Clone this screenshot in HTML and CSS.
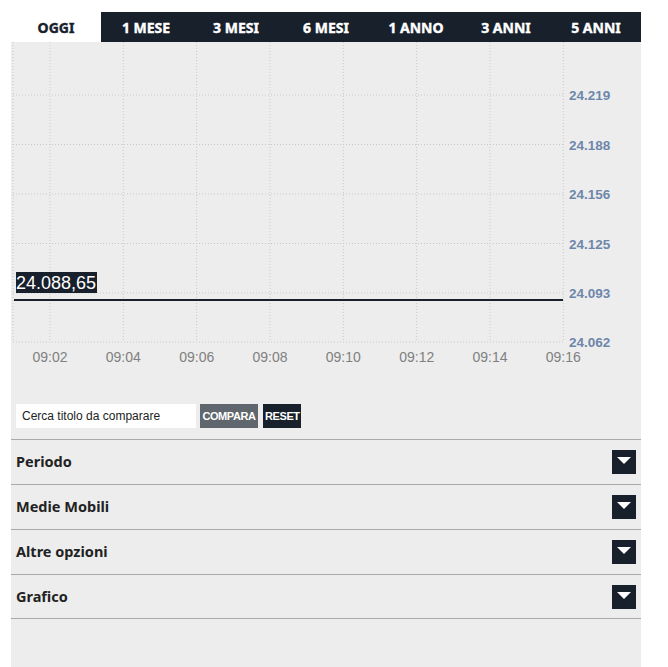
FILE: index.html
```html
<!DOCTYPE html>
<html lang="it">
<head>
<meta charset="utf-8">
<title>Grafico</title>
<link rel="stylesheet" href="styles.css">
</head>
<body>
<div class="widget">
  <nav class="tabs">
    <div class="tab active">OGGI</div>
    <div class="tab">1 MESE</div>
    <div class="tab">3 MESI</div>
    <div class="tab">6 MESI</div>
    <div class="tab">1 ANNO</div>
    <div class="tab">3 ANNI</div>
    <div class="tab">5 ANNI</div>
  </nav>
  <div class="panel">
    <svg class="chart" width="630" height="362" viewBox="0 0 630 362">
      <g class="grid">
        <line x1="2" y1="0" x2="2" y2="300"/>
        <line x1="39" y1="0" x2="39" y2="300"/>
        <line x1="112.3" y1="0" x2="112.3" y2="300"/>
        <line x1="185.7" y1="0" x2="185.7" y2="300"/>
        <line x1="259" y1="0" x2="259" y2="300"/>
        <line x1="332.3" y1="0" x2="332.3" y2="300"/>
        <line x1="405.7" y1="0" x2="405.7" y2="300"/>
        <line x1="479" y1="0" x2="479" y2="300"/>
        <line x1="552.3" y1="0" x2="552.3" y2="300"/>
        <line x1="2" y1="53" x2="552" y2="53"/>
        <line x1="2" y1="102.5" x2="552" y2="102.5"/>
        <line x1="2" y1="152" x2="552" y2="152"/>
        <line x1="2" y1="201.5" x2="552" y2="201.5"/>
        <line x1="2" y1="251" x2="552" y2="251"/>
        <line x1="2" y1="300" x2="552" y2="300"/>
      </g>
      <g class="ylabels">
        <text x="558" y="58">24.219</text>
        <text x="558" y="107.5">24.188</text>
        <text x="558" y="157">24.156</text>
        <text x="558" y="206.5">24.125</text>
        <text x="558" y="256">24.093</text>
        <text x="558" y="305">24.062</text>
      </g>
      <g class="xlabels">
        <text x="39" y="320">09:02</text>
        <text x="112.3" y="320">09:04</text>
        <text x="185.7" y="320">09:06</text>
        <text x="259" y="320">09:08</text>
        <text x="332.3" y="320">09:10</text>
        <text x="405.7" y="320">09:12</text>
        <text x="479" y="320">09:14</text>
        <text x="552.3" y="320">09:16</text>
      </g>
      <line class="series" x1="3" y1="258" x2="552" y2="258"/>
      <rect class="price-bg" x="5" y="230" width="81" height="21"/>
      <text class="price" x="5" y="247">24.088,65</text>
    </svg>
    <div class="compare">
      <input class="search" type="text" placeholder="Cerca titolo da comparare">
      <button class="btn btn-compare">COMPARA</button>
      <button class="btn btn-reset">RESET</button>
    </div>
    <div class="options">
      <div class="option"><span class="option-label">Periodo</span><span class="toggle"><svg width="14" height="8" viewBox="0 0 14 8"><polygon points="0,0 14,0 7,7" fill="#fff"/></svg></span></div>
      <div class="option"><span class="option-label">Medie Mobili</span><span class="toggle"><svg width="14" height="8" viewBox="0 0 14 8"><polygon points="0,0 14,0 7,7" fill="#fff"/></svg></span></div>
      <div class="option"><span class="option-label">Altre opzioni</span><span class="toggle"><svg width="14" height="8" viewBox="0 0 14 8"><polygon points="0,0 14,0 7,7" fill="#fff"/></svg></span></div>
      <div class="option"><span class="option-label">Grafico</span><span class="toggle"><svg width="14" height="8" viewBox="0 0 14 8"><polygon points="0,0 14,0 7,7" fill="#fff"/></svg></span></div>
    </div>
  </div>
</div>
</body>
</html>
```
FILE: styles.css
```css
* { box-sizing: border-box; }
html, body { margin: 0; padding: 0; background: #fff; }
body { font-family: "Liberation Sans", Arial, sans-serif; }

.widget {
  width: 630px;
  margin: 12px 0 0 11px;
}

.tabs {
  display: grid;
  grid-template-columns: repeat(7, 1fr);
  height: 30px;
  background: #18202b;
}
.tab {
  display: flex;
  align-items: center;
  justify-content: center;
  padding-top: 1px;
  font-family: "Noto Sans", sans-serif;
  font-weight: 700;
  font-size: 14px;
  color: #fff;
  -webkit-text-stroke: 0.4px #fff;
}
.tab.active {
  background: #fff;
  color: #18202b;
  -webkit-text-stroke: 0.4px #18202b;
}

.panel {
  background: #ededed;
  height: 625px;
}

.chart { display: block; }
.grid line {
  stroke: #c9c9c9;
  stroke-width: 1;
  stroke-dasharray: 1 2;
}
.ylabels text {
  font-family: "Liberation Sans", Arial, sans-serif;
  font-weight: 700;
  font-size: 13.5px;
  fill: #6d87ab;
}
.xlabels text {
  font-family: "Liberation Sans", Arial, sans-serif;
  font-size: 14px;
  fill: #808080;
  text-anchor: middle;
}
.series { stroke: #18202b; stroke-width: 2; }
.price-bg { fill: #18202b; }
.price {
  font-family: "Liberation Sans", Arial, sans-serif;
  font-size: 18px;
  fill: #fff;
}

.compare {
  display: flex;
  align-items: center;
  height: 24px;
  padding-left: 5px;
  margin-bottom: 11px;
}
.search {
  width: 180px;
  height: 24px;
  border: none;
  background: #fff;
  padding: 0 6px;
  font-family: "Liberation Sans", Arial, sans-serif;
  font-size: 12px;
  color: #222;
  outline: none;
}
.search::placeholder { color: #222; opacity: 1; }
.btn {
  height: 24px;
  border: none;
  padding: 0 2px;
  font-family: "Liberation Sans", Arial, sans-serif;
  font-weight: 700;
  font-size: 11px;
  letter-spacing: -0.4px;
  color: #fff;
}
.btn-compare { width: 58px; margin-left: 4px; background: #5f666d; }
.btn-reset { width: 38px; margin-left: 5px; background: #18202b; }

.option {
  display: flex;
  align-items: center;
  justify-content: space-between;
  height: 45px;
  border-top: 1px solid #aaa;
  padding: 0 5px;
}
.option:last-child { border-bottom: 1px solid #aaa; }
.option-label {
  font-family: "Noto Sans", sans-serif;
  font-weight: 700;
  font-size: 14.5px;
  color: #222;
  margin-top: -2px;
}
.toggle {
  width: 24px;
  height: 24px;
  background: #18202b;
  display: flex;
  align-items: center;
  justify-content: center;
  padding-bottom: 2px;
}
.toggle svg { display: block; }
```
